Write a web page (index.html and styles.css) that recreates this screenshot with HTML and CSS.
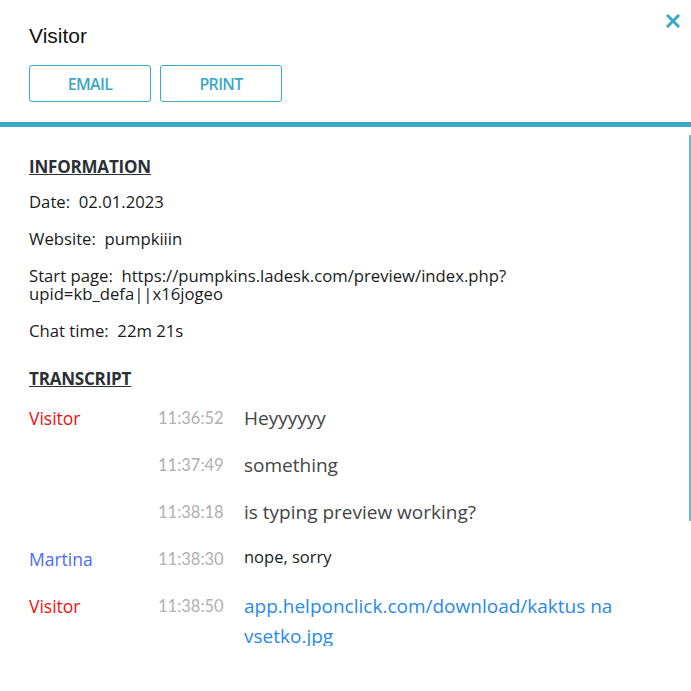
FILE: index.html
```html
<!DOCTYPE html>
<html lang="en">
<head>
    <meta charset="UTF-8">
    <title>Visitor</title>
    <link rel="stylesheet" href="styles.css">
</head>
<body>
<div class="dialog">
    <div class="header">
        <h1>Visitor</h1>
        <button class="close" aria-label="Close">
            <svg width="14" height="14" viewBox="0 0 14 14"><path d="M2 2L12 12M12 2L2 12" stroke="#3aa9c6" stroke-width="3" stroke-linecap="square"/></svg>
        </button>
        <div class="actions">
            <button class="btn">EMAIL</button>
            <button class="btn">PRINT</button>
        </div>
    </div>

    <div class="content">
        <div class="scroll-thumb"></div>

        <h2>INFORMATION</h2>
        <p>Date:&nbsp; 02.01.2023</p>
        <p>Website:&nbsp; pumpkiiin</p>
        <p>Start page:&nbsp; https://pumpkins.ladesk.com/preview/index.php?<br>upid=kb_defa||x16jogeo</p>
        <p>Chat time:&nbsp; 22m 21s</p>

        <h2 class="transcript-title">TRANSCRIPT</h2>
        <div class="transcript">
            <div class="who visitor">Visitor</div><div class="time">11:36:52</div><div class="msg">Heyyyyyy</div>
            <div class="who"></div><div class="time">11:37:49</div><div class="msg">something</div>
            <div class="who"></div><div class="time">11:38:18</div><div class="msg">is typing preview working?</div>
            <div class="who agent">Martina</div><div class="time">11:38:30</div><div class="msg small">nope, sorry</div>
            <div class="who visitor">Visitor</div><div class="time">11:38:50</div><div class="msg"><a href="#">app.helponclick.com/download/kaktus na vsetko.jpg</a></div>
        </div>
    </div>
</div>
</body>
</html>
```

FILE: styles.css
```css
body { margin: 0; background: #fff; font-family: "Open Sans", "Noto Sans", sans-serif; color: #222; }
.dialog { width: 691px; height: 691px; overflow: hidden; position: relative; }

.header { position: relative; height: 100px; padding: 22px 29px 0; border-bottom: 5px solid #3aa9c6; box-sizing: content-box; }
.header h1 { margin: 0 0 15px; font-family: "Liberation Sans", Arial, sans-serif; font-weight: normal; font-size: 21px; line-height: 28px; color: #111; }
.close { position: absolute; top: 14px; right: 10px; background: none; border: 0; padding: 0; width: 16px; height: 16px; cursor: pointer; }
.actions { display: flex; gap: 9px; }
.btn { width: 122px; height: 37px; background: #fff; border: 1px solid #3aa9c6; border-radius: 3px; color: #3aa9c6; font-family: "Open Sans", sans-serif; font-weight: 600; font-size: 16px; letter-spacing: -0.7px; }

.content { position: relative; height: 489px; padding: 30px 29px 0; overflow: hidden; }
.scroll-thumb { position: absolute; right: 0; top: 8px; width: 2px; height: 386px; background: #5bc2d6; }
.content h2 { margin: 0 0 16px; font-size: 17px; line-height: 20px; font-weight: 700; color: #2b3035; text-decoration: underline; letter-spacing: -0.2px; }
.content p { margin: 0 0 19px; font-size: 16.7px; line-height: 18px; color: #1a1a1a; }
.transcript-title { margin-top: 29px !important; margin-bottom: 14px !important; }

.transcript { display: grid; grid-template-columns: 129px 86px 1fr; row-gap: 17px; align-items: start; }
.who { font-size: 17.5px; line-height: 30px; }
.visitor { color: #f01010; }
.agent { color: #4a6cf2; }
.time { font-family: "Lato", sans-serif; font-size: 16.5px; line-height: 30px; color: #b0b0b0; }
.msg { font-size: 19px; line-height: 30px; color: #444; }
.msg.small { font-size: 16.5px; line-height: 26px; color: #222; }
.msg a { color: #2a8ae6; text-decoration: none; }
```
